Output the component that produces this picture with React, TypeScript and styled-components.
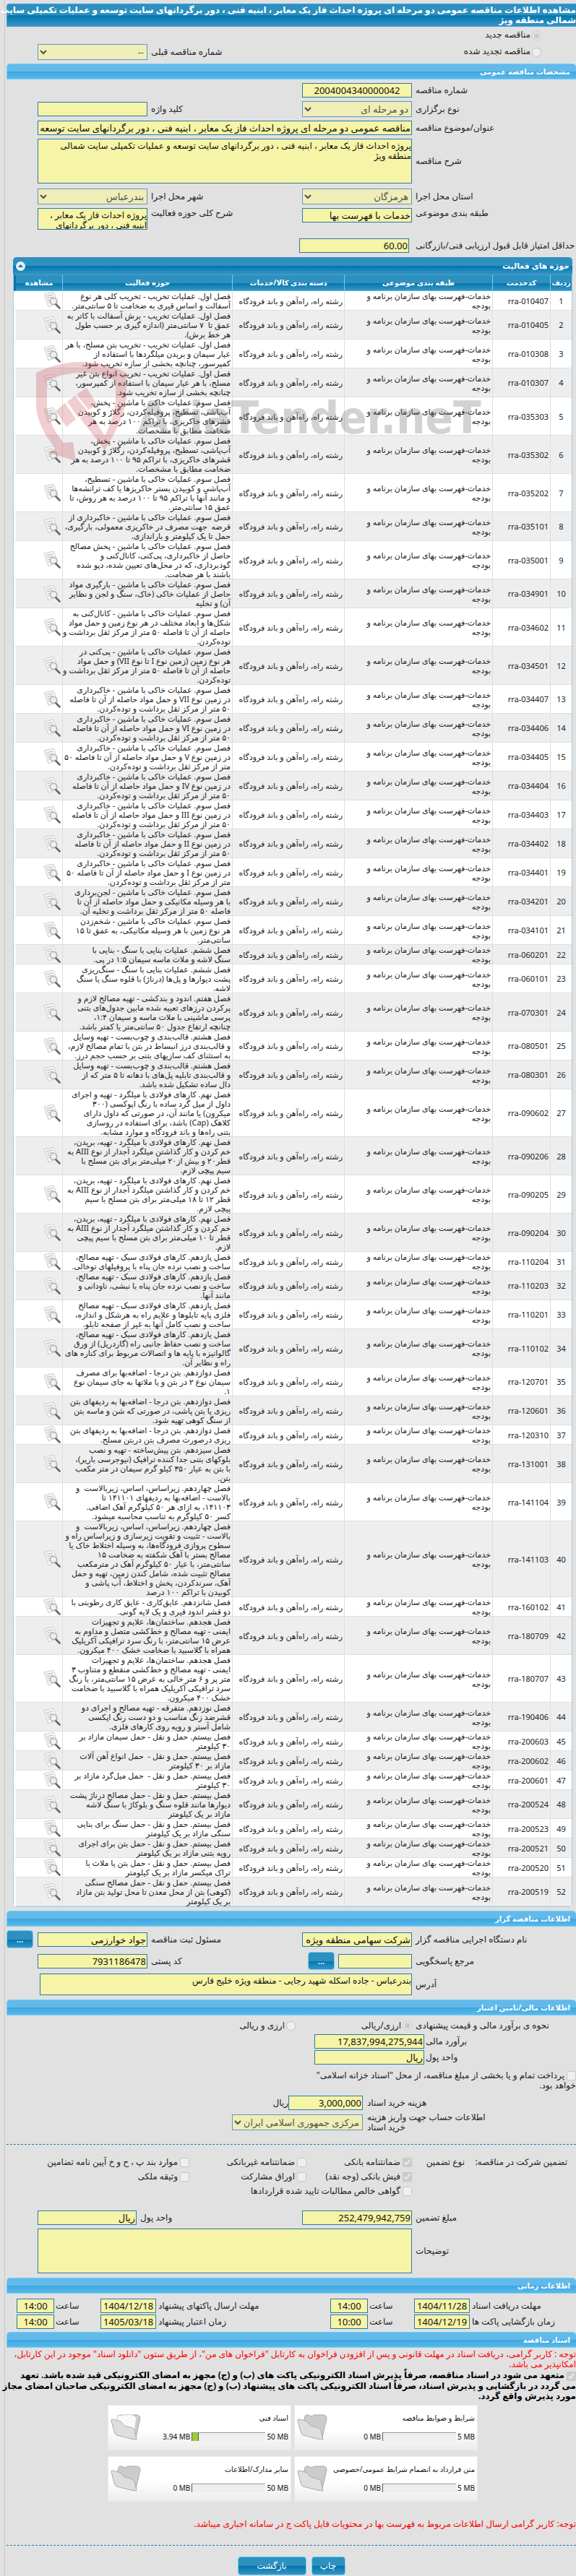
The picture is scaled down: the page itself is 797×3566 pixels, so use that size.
import React from "react";
import styled, { createGlobalStyle, css } from "styled-components";

const FONT = `"Noto Sans", "DejaVu Sans", sans-serif`;

const GlobalStyle = createGlobalStyle`
  * { box-sizing: border-box; }
  body { margin: 0; background: #e1e1e1; color: #222; font: 12px/14px ${FONT}; overflow-x: hidden; }
  input, textarea, button { font-family: inherit; }
`;

const darkBar = css`
  background: linear-gradient(#2e90bf 0, #2e90bf 50%, #0077ae 52%, #3a94c4 100%);
`;

const Page = styled.main`
  margin-left: 6px;
  padding: 5px 0 5px 2px;
  border-left: 1px solid #c8c8c8;
  display: flex;
  flex-direction: column;
`;

const TitleBar = styled.h1`
  ${darkBar}
  margin: 0;
  padding: 1px 0 1px 8px;
  border: 1px solid #3c9be0;
  border-right: 0;
  border-radius: 4px 0 0 0;
  color: #fff;
  font-size: 12px;
  line-height: 14px;
  font-weight: bold;
  white-space: nowrap;
`;

const SectionBar = styled.h2`
  margin: 0;
  height: 22px;
  padding: 0 8px;
  display: flex;
  align-items: center;
  border: 1px solid #6fd0f8;
  border-right: 0;
  border-radius: 5px 5px 0 0;
  background: linear-gradient(#63b9e9 0, #63b9e9 48%, #3aa7e2 50%, #5bb8ea 100%);
  color: #fff;
  font-size: 10px;
  font-weight: bold;
`;

const fieldLook = css`
  border: 1px solid #2a7aa8;
  background: #f6f4a6;
  color: #111;
  border-radius: 0;
  margin: 0;
  min-width: 0;
`;

const Field = styled.input<{ $center?: boolean }>`
  ${fieldLook}
  height: 20px;
  width: 100%;
  padding: 0 1px;
  font-size: 13px;
  text-align: ${(p) => (p.$center ? "center" : "right")};
`;

const Area = styled.textarea<{ $h: number }>`
  ${fieldLook}
  display: block;
  width: 100%;
  height: ${(p) => p.$h}px;
  padding: 2px 0;
  resize: none;
  font-size: 12px;
  line-height: 14px;
  overflow-y: auto;
`;

const Choice = styled.select`
  ${fieldLook}
  height: 22px;
  width: 100%;
  font-family: inherit;
  font-size: 13px;
`;

const Form = styled.div<{ $flush?: boolean }>`
  display: flex;
  flex-direction: column;
  gap: 5px;
  padding: 5px 0 6px ${(p) => (p.$flush ? 0 : 43)}px;
`;

const Row = styled.div<{ $cols?: string; $top?: boolean; $after?: number }>`
  display: grid;
  grid-template-columns: ${(p) => p.$cols ?? "227px 152px 1fr 152px"};
  align-items: ${(p) => (p.$top ? "start" : "center")};
  margin-bottom: ${(p) => p.$after ?? 0}px;
`;

const Wide = styled.div`
  grid-column: 2 / -1;
`;

const Left = styled.div`
  text-align: left;
`;

const Label = styled.label<{ $pad?: number }>`
  text-align: left;
  padding-left: ${(p) => p.$pad ?? 5}px;
  white-space: nowrap;
`;

const Kinds = styled.div`
  padding: 0 0 5px 43px;
`;

const KindRow = styled.div`
  display: grid;
  grid-template-columns: 1fr 110px 152px;
  align-items: center;
  height: 23px;
  padding-right: 48px;
  white-space: nowrap;
`;

const Radio = styled.input.attrs({ type: "radio", disabled: true })`
  width: 13px;
  height: 13px;
  margin: 0 0 0 2px;
  flex: none;
  vertical-align: middle;
`;

const Check = styled.input.attrs({ type: "checkbox", disabled: true })`
  width: 13px;
  height: 13px;
  margin: 0 0 0 3px;
  flex: none;
  vertical-align: middle;
`;

const MoreButton = styled.button`
  ${darkBar}
  width: 37px;
  height: 25px;
  border: 1px solid #6fd0f8;
  border-radius: 4px;
  color: #fff;
  font-size: 11px;
  font-weight: bold;
  padding: 0;
`;

const Panel = styled.section`
  position: relative;
  margin: 0 5px 5px 9px;
  border: 1px solid #a5cbe2;
  border-radius: 5px;
  background: #fff;
`;

const PanelHead = styled.header`
  ${darkBar}
  height: 24px;
  margin: -1px -1px 0;
  padding: 0 4px;
  border-radius: 5px 5px 0 0;
  display: flex;
  align-items: center;
  justify-content: space-between;
  color: #fff;
  font-size: 11px;
  font-weight: bold;
`;

const Collapse = styled.button`
  width: 13px;
  height: 13px;
  padding: 0;
  border: 0;
  border-radius: 50%;
  background: #e4f1f8;
  display: grid;
  place-items: center;
`;

const Grid = styled.table`
  width: 100%;
  table-layout: fixed;
  border-collapse: separate;
  border-spacing: 0;
  font-size: 11px;
  line-height: 13px;
  th {
    ${darkBar}
    height: 23px;
    padding: 0;
    color: #fff;
    font-size: 10px;
    border-left: 1px solid #7cc8ee;
    border-bottom: 1px solid #58bfe8;
    border-top: 1px solid #3fa0d0;
  }
  th:last-child { border-left-width: 3px; border-left-color: #0077ae; }
  td {
    padding: 0 2px;
    border-left: 1px solid #dedede;
    border-bottom: 1px solid #dedede;
    text-align: right;
    vertical-align: middle;
    white-space: pre;
  }
  td:first-child { text-align: center; }
  td:last-child { border-left: 3px solid #fff; }
  tbody tr:nth-child(even) td { background: #eee; }
`;

const Col = styled.col<{ $w?: number }>`
  width: ${(p) => (p.$w ? p.$w + "px" : "auto")};
`;

const ViewButton = styled.button`
  display: block;
  width: 24px;
  height: 24px;
  padding: 0;
  border: 0;
  background: none;
`;

const Watermark = styled.div`
  position: absolute;
  left: 31px;
  top: 144px;
  display: flex;
  direction: ltr;
  gap: 14px;
  pointer-events: none;
`;

const WatermarkText = styled.span`
  padding-top: 48px;
  font: bold 63px/60px "DejaVu Sans Condensed", sans-serif;
  color: rgba(90, 90, 90, 0.27);
  white-space: nowrap;
`;

const Rule = styled.hr`
  margin: 0;
  border: 0;
  border-top: 1px dashed #2a7aa8;
`;

const Money = styled.div`
  padding: 3px 0 14px;
  display: flex;
  flex-direction: column;
`;

const MoneyRow = styled.div<{ $label: number; $field: string; $h: number }>`
  display: grid;
  grid-template-columns: ${(p) => p.$label}px ${(p) => p.$field} 1fr;
  align-items: center;
  min-height: ${(p) => p.$h}px;
`;

const Treasury = styled.label`
  display: block;
  padding: 7px 0 6px;
`;

const Option = styled.label`
  display: flex;
  align-items: center;
  white-space: nowrap;
`;

const Guarantee = styled.div`
  display: grid;
  grid-template-columns: 142px 73px 146px 162px 1fr;
  grid-auto-rows: 20px;
  align-items: center;
  padding: 14px 12px 12px 0;
  white-space: nowrap;
  & > :nth-child(6), & > :nth-child(9) { grid-column-start: 3; }
`;

const Times = styled.div`
  display: grid;
  grid-template-columns: 147px 77px 64px 52px 1fr 77px 64px 52px;
  gap: 2px 0;
  align-items: center;
  padding: 7px 0 4px 14px;
`;

const Notice = styled.p<{ $gap?: number }>`
  margin: ${(p) => p.$gap ?? 0}px 0;
  padding-top: 2px;
  color: #f00;
`;

const Pledge = styled.label`
  display: block;
  font-weight: bold;
  color: #000;
  margin: 1px 0 5px;
  white-space: nowrap;
`;

const Cards = styled.div`
  display: grid;
  grid-template-columns: 254px 254px;
  justify-content: center;
  gap: 8px 4px;
  padding-left: 4px;
`;

const Card = styled.article`
  height: 63px;
  display: grid;
  grid-template-columns: minmax(0, 1fr) 42px;
  align-items: center;
  padding: 0 3px;
  background: linear-gradient(#fff 55%, #ececec);
  border: 1px solid #eaeaea;
`;

const CardBody = styled.div`
  display: flex;
  flex-direction: column;
  gap: 12px;
  color: #111;
  font-size: 10px;
  white-space: nowrap;
`;

const Usage = styled.div`
  display: flex;
  align-items: center;
  gap: 2px;
`;

const Track = styled.div`
  width: 102px;
  height: 12px;
  direction: ltr;
  background: #eee;
  border-top: 1px solid #999;
  border-left: 1px solid #555;
`;

const Fill = styled.div`
  height: 100%;
  background: #9acd32;
  border-right: 1px solid #555;
`;

const Actions = styled.footer`
  display: flex;
  justify-content: center;
  gap: 7px;
  padding: 15px 0 0;
`;

const Action = styled.button<{ $w: number }>`
  ${darkBar}
  width: ${(p) => p.$w}px;
  height: 26px;
  border: 1px solid #6fd0f8;
  border-radius: 4px;
  color: #fff;
  font-size: 12px;
  padding: 0;
`;

const ROWS: [string, string][] = [
  ["010407", "فصل اول. عملیات تخریب - تخریب کلی هر نوع\nآسفالت و اساس قیری به ضخامت تا ۵ سانتی‌متر."],
  ["010405", "فصل اول. عملیات تخریب - برش آسفالت با کاتر به\nعمق تا  ۷ سانتی‌متر (اندازه گیری بر حسب طول\nهر خط برش)."],
  ["010308", "فصل اول. عملیات تخریب - تخریب بتن مسلح، با هر\nعیار سیمان و بریدن میلگردها با استفاده از\nکمپرسور، چنانچه بخشی از سازه تخریب شود."],
  ["010307", "فصل اول. عملیات تخریب - تخریب انواع بتن غیر\nمسلح، با هر عیار سیمان با استفاده از کمپرسور،\nچنانچه بخشی از سازه تخریب شود."],
  ["035303", "فصل سوم. عملیات خاکی با ماشین - پخش،\nآب‌پاشی، تسطیح، پروفیله‌کردن، رگلاژ و کوبیدن\nقشرهای خاکریزی، با تراکم ۱۰۰ درصد به هر\nضخامت مطابق با مشخصات."],
  ["035302", "فصل سوم. عملیات خاکی با ماشین - پخش،\nآب‌پاشی، تسطیح، پروفیله‌کردن، رگلاژ و کوبیدن\nقشرهای خاکریزی، با تراکم ۹۵ تا ۱۰۰ درصد به هر\nضخامت مطابق با مشخصات."],
  ["035202", "فصل سوم. عملیات خاکی با ماشین - تسطیح،\nآب‌پاشي و کوبیدن بستر خاکریزها یا کف ترانشه‌ها\nو مانند آنها با تراکم ۹۵ تا ۱۰۰ درصد به هر روش، تا\nعمق ۱۵ سانتی‌متر."],
  ["035101", "فصل سوم. عملیات خاکی با ماشین - خاکبرداری از\nقرضه  جهت مصرف در خاکریزی معمولی، بارگیری،\nحمل تا یک کیلومتر و باراندازی."],
  ["035001", "فصل سوم. عملیات خاکی با ماشین - پخش مصالح\nحاصل از خاکبرداری، پی‌کنی، کانال‌کنی و\nگودبرداری، که در محل‌های تعیین شده، دپو شده\nباشند با هر ضخامت."],
  ["034901", "فصل سوم. عملیات خاکی با ماشین - بارگیری مواد\nحاصل از عملیات خاکی (خاک، سنگ و لجن و نظایر\nآن) و تخلیه"],
  ["034602", "فصل سوم. عملیات خاکی با ماشین - کانال‌کنی به\nشکل‌ها و ابعاد مختلف در هر نوع زمین و حمل مواد\nحاصله از آن تا فاصله ۵۰ متر از مرکز ثقل برداشت و\nتوده‌کردن."],
  ["034501", "فصل سوم. عملیات خاکی با ماشین - پی‌کنی در\nهر نوع زمین (زمین نوع I تا نوع VII) و حمل مواد\nحاصله از آن تا فاصله ۵۰ متر از مرکز ثقل برداشت و\nتوده‌کردن."],
  ["034407", "فصل سوم. عملیات خاکی با ماشین - خاکبرداری\nدر زمین نوع VII و حمل مواد حاصله از آن تا فاصله\n۵۰ متر از مرکز ثقل برداشت و توده‌کردن."],
  ["034406", "فصل سوم. عملیات خاکی با ماشین - خاکبرداری\nدر زمین نوع VI و حمل مواد حاصله از آن تا فاصله\n۵۰ متر از مرکز ثقل برداشت و توده‌کردن."],
  ["034405", "فصل سوم. عملیات خاکی با ماشین - خاکبرداری\nدر زمین نوع V و حمل مواد حاصله از آن تا فاصله ۵۰\nمتر از مرکز ثقل برداشت و توده‌کردن."],
  ["034404", "فصل سوم. عملیات خاکی با ماشین - خاکبرداری\nدر زمین نوع IV و حمل مواد حاصله از آن تا فاصله\n۵۰ متر از مرکز ثقل برداشت و توده‌کردن."],
  ["034403", "فصل سوم. عملیات خاکی با ماشین - خاکبرداری\nدر زمین نوع III و حمل مواد حاصله از آن تا فاصله\n۵۰ متر از مرکز ثقل برداشت و توده‌کردن."],
  ["034402", "فصل سوم. عملیات خاکی با ماشین - خاکبرداری\nدر زمین نوع II و حمل مواد حاصله از آن تا فاصله\n۵۰ متر از مرکز ثقل برداشت و توده‌کردن."],
  ["034401", "فصل سوم. عملیات خاکی با ماشین - خاکبرداری\nدر زمین نوع I و حمل مواد حاصله از آن تا فاصله ۵۰\nمتر از مرکز ثقل برداشت و توده‌کردن."],
  ["034201", "فصل سوم. عملیات خاکی با ماشین - لجن‌برداری\nبا هر وسیله مکانیکی و حمل مواد حاصله از آن تا\nفاصله ۵۰ متر از مرکز ثقل برداشت و تخلیه آن."],
  ["034101", "فصل سوم. عملیات خاکی با ماشین - شخم‌زدن\nهر نوع زمین با هر وسیله مکانیکی، به عمق تا ۱۵\nسانتی‌متر."],
  ["060201", "فصل ششم. عملیات بنایی با سنگ - بنایی با\nسنگ لاشه و ملات ماسه سیمان ۱:۵ در پی."],
  ["060101", "فصل ششم. عملیات بنایی با سنگ - سنگ‌ریزی\nپشت دیوارها و پل‌ها (درناژ) با قلوه سنگ یا سنگ\nلاشه."],
  ["070301", "فصل هفتم. اندود و بندکشی - تهیه مصالح لازم و\nپرکردن درزهای تعبیه شده مابین جدول‌های بتنی\nپرسی ماشینی با ملات ماسه و سیمان ۱:۴،\nچنانچه ارتفاع جدول ۵۰ سانتی‌متر یا کمتر باشد."],
  ["080501", "فصل هشتم. قالب‌بندی و چوب‌بست - تهیه وسایل\nو قالب‌بندی درز انبساط در بتن با تمام مصالح لازم،\nبه استثنای کف سازیهای بتنی بر حسب حجم درز."],
  ["080301", "فصل هشتم. قالب‌بندی و چوب‌بست - تهیه وسایل\nو قالب‌بندی تابلیه پل‌های با دهانه تا ۵ متر که از\nدال ساده تشکیل شده باشد."],
  ["090602", "فصل نهم. کارهای فولادی با میلگرد - تهیه و اجرای\nداول از میل گرد ساده با رنگ اپوکسی (۳۰۰\nمیکرون) یا مانند آن، در صورتی که داول دارای\nکلاهک (Cap) باشد، برای استفاده در روسازی\nبتنی راه‌ها و باند فرودگاه و موارد مشابه."],
  ["090206", "فصل نهم. کارهای فولادی با میلگرد - تهیه، بریدن،\nخم کردن و کار گذاشتن میلگرد آجدار از نوع AIII به\nقطر۲۰ و بیش از۲۰ میلی‌متر برای بتن مسلح با\nسیم پیچی لازم."],
  ["090205", "فصل نهم. کارهای فولادی با میلگرد - تهیه، بریدن،\nخم کردن و کار گذاشتن میلگرد آجدار از نوع AIII به\nقطر ۱۲ تا ۱۸ میلی‌متر برای بتن مسلح با سیم\nپیچی لازم."],
  ["090204", "فصل نهم. کارهای فولادی با میلگرد - تهیه، بریدن،\nخم کردن و کار گذاشتن میلگرد آجدار از نوع AIII به\nقطر تا ۱۰ میلی‌متر برای بتن مسلح با سیم پیچی\nلازم."],
  ["110204", "فصل یازدهم. کارهای فولادی سبک - تهیه مصالح،\nساخت و نصب نرده جان پناه با پروفیلهای توخالی."],
  ["110203", "فصل یازدهم. کارهای فولادی سبک - تهیه مصالح،\nساخت و نصب نرده جان پناه با نبشی، ناودانی و\nمانند آنها."],
  ["110201", "فصل یازدهم. کارهای فولادی سبک - تهیه مصالح\nفلزی پایه تابلوها و علایم راه به هرشکل و اندازه،\nساخت و نصب کامل آنها به غیر از صفحه تابلو."],
  ["110102", "فصل یازدهم. کارهای فولادی سبک - تهیه مصالح،\nساخت و نصب حفاظ جانبی راه (گاردریل) از ورق\nگالوانیزه با پایه ها و اتصالات مربوط برای کناره های\nراه و نظایر آن."],
  ["120701", "فصل دوازدهم. بتن درجا - اضافه‌بها برای مصرف\nسیمان نوع ۲ در بتن و یا ملاتها به جای سیمان نوع\n۱."],
  ["120601", "فصل دوازدهم. بتن درجا - اضافه‌بها به ردیفهای بتن\nریزی یا بتن پاشی، در صورتی که شن و ماسه بتن\nاز سنگ کوهی تهیه شود."],
  ["120310", "فصل دوازدهم. بتن درجا - اضافه‌بها به ردیفهای بتن\nریزی درصورت مصرف بتن دربتن مسلح."],
  ["131001", "فصل سیزدهم. بتن پیش‌ساخته - تهیه و نصب\nبلوکهای بتنی جدا کننده ترافیک (نیوجرسی باریر)،\nبا بتن به عیار ۳۵۰ کیلو گرم سیمان در متر مکعب\nبتن."],
  ["141104", "فصل چهاردهم. زیراساس، اساس، زیربالاست  و\nبالاست - اضافه‌بها به ردیفهای ۱۴۱۱۰۱ تا\n۱۴۱۱۰۳، به ازای هر ۵۰ کیلوگرم آهک اضافی.\nکسر ۵۰ کیلوگرم به تناسب محاسبه میشود."],
  ["141103", "فصل چهاردهم. زیراساس، اساس، زیربالاست  و\nبالاست - تثبیت و تقویت زیرسازی و زیراساس راه و\nسطوح پروازی فرودگاه‌ها، به وسیله اختلاط خاک یا\nمصالح بستر با آهک شکفته به ضخامت ۱۵\nسانتی‌متر، با عیار ۵۰ کیلوگرم آهک در مترمکعب\nمصالح تثبیت شده، شامل کندن زمین، تهیه و حمل\nآهک، سرندکردن، پخش و اختلاط، آب پاشی و\nکوبیدن با تراکم ۱۰۰ درصد"],
  ["160102", "فصل شانزدهم. عایق‌کاری - عایق کاری رطوبتی با\nدو قشر اندود قیری و یک لایه گونی."],
  ["180709", "فصل هجدهم. ساختمان‌ها، علایم و تجهیزات\nایمنی - تهیه مصالح و خط‌کشی متصل و مداوم به\nعرض ۱۵ سانتی‌متر، با رنگ سرد ترافیکی آکریلیک\nهمراه با گلاسبید با ضخامت خشک ۴۰۰ میکرون."],
  ["180707", "فصل هجدهم. ساختمان‌ها، علایم و تجهیزات\nایمنی - تهیه مصالح و خط‌کشی منقطع و متناوب ۳\nمتر پر و ۶ متر خالی به عرض ۱۵ سانتی‌متر، با رنگ\nسرد ترافیکی آکریلیک همراه با گلاسبید با ضخامت\nخشک ۴۰۰ میکرون."],
  ["190406", "فصل نوزدهم. متفرقه - تهیه مصالح و اجرای دو\nقشرضد زنگ مناسب و دو دست رنگ اپکسی\nشامل آستر و رویه روی کارهای فلزی."],
  ["200603", "فصل بیستم. حمل و نقل - حمل سیمان مازاد بر\n۳۰ کیلومتر"],
  ["200602", "فصل بیستم. حمل و نقل -  حمل انواع آهن آلات\nمازاد بر ۳۰ کیلومتر"],
  ["200601", "فصل بیستم. حمل و نقل -  حمل میل‌گرد مازاد بر\n۳۰ کیلومتر"],
  ["200524", "فصل بیستم. حمل و نقل - حمل مصالح درناژ پشت\nدیوارها مانند قلوه سنگ و بلوکاژ با سنگ لاشه\nمازاد بر یک کیلومتر"],
  ["200523", "فصل بیستم. حمل و نقل - حمل سنگ برای بنایی\nسنگی مازاد بر یک کیلومتر"],
  ["200521", "فصل بیستم. حمل و نقل - حمل بتن برای اجرای\nرویه بتنی مازاد بر یک کیلومتر"],
  ["200520", "فصل بیستم. حمل و نقل - حمل بتن یا ملات با\nتراک میکسر مازاد بر یک کیلومتر"],
  ["200519", "فصل بیستم. حمل و نقل - حمل مصالح سنگی\n(کوهی) بتن از محل معدن تا محل تولید بتن مازاد\nبر یک کیلومتر"],
];

const ViewIcon = () => (
  <svg width="24" height="24" viewBox="0 0 24 24">
    <path d="M1 3 14 0l6 15-13 6z" fill="#f6f6f6" stroke="#ccc" />
    <path d="M4 6l9-2M5 9l9-2M6 12l5-1M7 15l4-1" stroke="#b5b5b5" />
    <circle cx="14" cy="13" r="4.5" fill="#eef0f0" fillOpacity=".9" stroke="#b0b0b0" strokeWidth="1.4" />
    <path d="m17.500 17.500 5 5" stroke="#666" strokeWidth="2.600" strokeLinecap="round" />
  </svg>
);

const Shield = () => (
  <svg width="126" height="138" viewBox="0 0 126 138">
    <g fill="rgba(190,30,45,.22)">
      <path d="M0 15Q62-15 125 15V50Q122 78 95 122L61 78 73 68 95 102Q110 72 110 50V26Q62 4 15 26V62Q18 88 38 112L51 111 55 137 17 126 27 120Q2 90 0 62z" />
      <path d="M27 68 40 57 55 79 42 90zM43 55 54 47 70 67 58 77zM56 45 70 36 85 60 72 66z" />
    </g>
  </svg>
);

const Folder = ({ full }: { full?: boolean }) => (
  <svg width="42" height="36" viewBox="0 0 42 36">
    <path d="M9 10 11 3Q12 0 15 1l5 2 4-2h11q6 0 6 5l-6 26-4 3z" fill="#ccc" stroke="#aaa" />
    {full && <path d="m9 2 20-2 7 5-4 24-22-10z" fill="#fafafa" stroke="#ccc" />}
    <path d="M1 9Q0 7 3 7l11 3 5 6q12 2 14 6l3 13-8-1L8 29Q6 28 5 24z" fill="#dedede" stroke="#aaa" />
  </svg>
);

const UsageCard = ({ title, used, total, percent, full }: { title: string; used: string; total: string; percent: number; full?: boolean }) => (
  <Card>
    <CardBody>
      <div>{title}</div>
      <Usage>
        <span dir="ltr">{total}</span>
        <Track>{percent > 0 && <Fill style={{ width: `${percent}%` }} />}</Track>
        <span dir="ltr">{used}</span>
      </Usage>
    </CardBody>
    <Folder full={full} />
  </Card>
);

const Pick = ({ id, text }: { id: string; text: string }) => (
  <Choice id={id} disabled>
    <option>{text}</option>
  </Choice>
);

const When = ({ id, label, date, time }: { id: string; label: string; date: string; time: string }) => (
  <>
    <Label $pad={3} htmlFor={id + "-d"}>{label}</Label>
    <Field id={id + "-d"} $center readOnly value={date} dir="ltr" />
    <Label $pad={2} htmlFor={id + "-t"}>ساعت</Label>
    <Field id={id + "-t"} $center readOnly value={time} dir="ltr" />
  </>
);

export default function App() {
  return (
    <div dir="rtl" lang="fa">
      <GlobalStyle />
      <Page>
        <TitleBar>
          مشاهده اطلاعات مناقصه عمومی دو مرحله ای پروژه احداث فاز یک معابر ، ابنیه فنی ، دور برگردانهای سایت توسعه و عملیات تکمیلی سایت<br />
          شمالی منطقه ویژ
        </TitleBar>
        <Kinds>
          <KindRow>
            <label><Radio name="kind" defaultChecked />مناقصه جدید</label>
          </KindRow>
          <KindRow>
            <label><Radio name="kind" />مناقصه تجدید شده</label>
            <Label htmlFor="prev">شماره مناقصه قبلی</Label>
            <Pick id="prev" text="--" />
          </KindRow>
        </Kinds>

        <SectionBar>مشخصات مناقصه عمومی</SectionBar>
        <Form>
          <Row>
            <Label htmlFor="no">شماره مناقصه</Label>
            <Field id="no" $center readOnly value="2004004340000042" />
          </Row>
          <Row>
            <Label htmlFor="type">نوع برگزاری</Label>
            <Pick id="type" text="دو مرحله ای" />
            <Label htmlFor="kw">کلید واژه</Label>
            <Field id="kw" readOnly value="" />
          </Row>
          <Row>
            <Label htmlFor="subject">عنوان/موضوع مناقصه</Label>
            <Wide>
              <Field id="subject" readOnly value="مناقصه عمومی دو مرحله ای پروژه احداث فاز یک معابر ، ابنیه فنی ، دور برگردانهای سایت توسعه و عملیات تکمیلی سایت شمالی منطقه ویژ" />
            </Wide>
          </Row>
          <Row $after={2}>
            <Label htmlFor="desc">شرح مناقصه</Label>
            <Wide>
              <Area id="desc" $h={62} readOnly value={"پروژه احداث فاز یک معابر ، ابنیه فنی ، دور برگردانهای سایت توسعه و عملیات تکمیلی سایت شمالی\nمنطقه ویژ"} />
            </Wide>
          </Row>
          <Row>
            <Label htmlFor="province">استان محل اجرا</Label>
            <Pick id="province" text="هرمزگان" />
            <Label htmlFor="city">شهر محل اجرا</Label>
            <Pick id="city" text="بندرعباس" />
          </Row>
          <Row $top $after={7}>
            <Label htmlFor="cls">طبقه بندی موضوعی</Label>
            <Field id="cls" readOnly value="خدمات با فهرست بها" />
            <Label htmlFor="scope">شرح کلی حوزه فعالیت</Label>
            <Area id="scope" $h={30} readOnly value="پروژه احداث فاز یک معابر ، ابنیه فنی ، دور برگردانهای سایت توسعه و عملیات تکمیلی سایت شمالی منطقه ویژ" />
          </Row>
          <Row $cols="231px 152px 1fr">
            <Label $pad={9} htmlFor="score">حداقل امتیاز قابل قبول ارزیابی فنی/بازرگانی</Label>
            <Field id="score" readOnly value="60.00" />
          </Row>
        </Form>

        <Panel>
          <PanelHead>
            حوزه های فعالیت
            <Collapse aria-label="بستن">
              <svg width="7" height="4" viewBox="0 0 7 4"><path d="M0 4 3.500 0 7 4z" fill="#1b6f9d" /></svg>
            </Collapse>
          </PanelHead>
          <Grid>
            <colgroup>
              <Col $w={30} />
              <Col $w={80} />
              <Col />
              <Col $w={155} />
              <Col $w={235} />
              <Col $w={67} />
            </colgroup>
            <thead>
              <tr>
                <th>ردیف</th>
                <th>کدخدمت</th>
                <th>طبقه بندی موضوعی</th>
                <th>دسته بندی کالا/خدمات</th>
                <th>حوزه فعالیت</th>
                <th>مشاهده</th>
              </tr>
            </thead>
            <tbody>
              {ROWS.map(([code, text], i) => (
                <tr key={code}>
                  <td>{i + 1}</td>
                  <td>rra-{code}</td>
                  <td>{"خدمات-فهرست بهای سازمان برنامه و\nبودجه"}</td>
                  <td>رشته راه، راه‌آهن و باند فرودگاه</td>
                  <td>{text}</td>
                  <td><ViewButton aria-label="مشاهده"><ViewIcon /></ViewButton></td>
                </tr>
              ))}
            </tbody>
          </Grid>
          <Watermark>
            <Shield />
            <WatermarkText>AriaTender.neT</WatermarkText>
          </Watermark>
        </Panel>

        <SectionBar>اطلاعات مناقصه گزار</SectionBar>
        <Form $flush>
          <Row $cols="227px 152px 1fr 152px 43px">
            <Label htmlFor="org">نام دستگاه اجرایی مناقصه گزار</Label>
            <Field id="org" readOnly value="شرکت سهامی منطقه ویژه اقتصادی" />
            <Label htmlFor="owner">مسئول ثبت مناقصه</Label>
            <Field id="owner" readOnly value="جواد خوارزمی" />
            <Left><MoreButton>...</MoreButton></Left>
          </Row>
          <Row $cols="227px 102px 42px 1fr 152px 43px">
            <Label htmlFor="ref">مرجع پاسخگویی</Label>
            <Field id="ref" readOnly value="" />
            <Left><MoreButton>...</MoreButton></Left>
            <Label htmlFor="zip">کد پستی</Label>
            <Field id="zip" readOnly value="7931186478" />
          </Row>
          <Row $cols="227px 1fr 46px">
            <Label htmlFor="addr">آدرس</Label>
            <Area id="addr" $h={30} readOnly value="بندرعباس - جاده اسکله شهید رجایی - منطقه ویژه خلیج فارس" />
          </Row>
        </Form>

        <SectionBar>اطلاعات مالی/تامین اعتبار</SectionBar>
        <Money>
          <MoneyRow $label={227} $field="161px" $h={22}>
            <Label as="span">نحوه ی برآورد مالی و قیمت پیشنهادی</Label>
            <Option><Radio name="cur" defaultChecked />ارزی/ریالی</Option>
            <Option><Radio name="cur" />ارزی و ریالی</Option>
          </MoneyRow>
          <MoneyRow $label={210} $field="152px" $h={22}>
            <Label $pad={2} htmlFor="est">برآورد مالی</Label>
            <Field id="est" readOnly value="17,837,994,275,944" />
          </MoneyRow>
          <MoneyRow $label={210} $field="152px" $h={22}>
            <Label $pad={2} htmlFor="unit">واحد پول</Label>
            <Field id="unit" readOnly value="ریال" />
          </MoneyRow>
          <Treasury>
            <Check />پرداخت تمام و یا بخشی از مبلغ مناقصه، از محل "اسناد خزانه اسلامی"<br />خواهد بود.
          </Treasury>
          <MoneyRow $label={295} $field="103px" $h={22}>
            <Label $pad={6} htmlFor="fee">هزینه خرید اسناد</Label>
            <Field id="fee" readOnly value="3,000,000" />
            <span>ریال</span>
          </MoneyRow>
          <MoneyRow $label={295} $field="181px" $h={32}>
            <Label $pad={6} htmlFor="acc">
              اطلاعات حساب جهت واریز هزینه<br />خرید اسناد
            </Label>
            <Pick id="acc" text="مرکزی جمهوری اسلامی ایران" />
          </MoneyRow>
        </Money>
        <Rule />

        <Guarantee>
          <span>تضمین شرکت در مناقصه:</span>
          <span>نوع تضمین</span>
          <Option><Check defaultChecked />ضمانتنامه بانکی</Option>
          <Option><Check />ضمانتنامه غیربانکی</Option>
          <Option><Check />موارد بند پ ، ح و خ آیین نامه تضامین</Option>
          <Option><Check defaultChecked />فیش بانکی (وجه نقد)</Option>
          <Option><Check />اوراق مشارکت</Option>
          <Option><Check />وثیقه ملکی</Option>
          <Option><Check />گواهی خالص مطالبات تایید شده قراردادها</Option>
        </Guarantee>
        <Form>
          <Row $cols="227px 152px 1fr 137px">
            <Label htmlFor="gAmount">مبلغ تضمین</Label>
            <Field id="gAmount" readOnly value="252,479,942,759" />
            <Label htmlFor="gUnit">واحد پول</Label>
            <Field id="gUnit" readOnly value="ریال" />
          </Row>
          <Row>
            <Label htmlFor="notes">توضیحات</Label>
            <Wide><Area id="notes" $h={62} readOnly value="" /></Wide>
          </Row>
        </Form>

        <SectionBar>اطلاعات زمانی</SectionBar>
        <Times>
          <When id="docs" label="مهلت دریافت اسناد" date="1404/11/28" time="14:00" />
          <When id="send" label="مهلت ارسال پاکتهای پیشنهاد" date="1404/12/18" time="14:00" />
          <When id="open" label="زمان بازگشایی پاکت ها" date="1404/12/19" time="10:00" />
          <When id="valid" label="زمان اعتبار پیشنهاد" date="1405/03/18" time="14:00" />
        </Times>

        <SectionBar>اسناد مناقصه</SectionBar>
        <Notice>
          توجه : کاربر گرامی، دریافت اسناد در مهلت قانونی و پس از افزودن فراخوان به کارتابل "فراخوان های من"، از طریق ستون "دانلود اسناد" موجود در این کارتابل،<br />
          امکانپذیر می باشد.
        </Notice>
        <Pledge>
          <Check defaultChecked />متعهد می شود در اسناد مناقصه، صرفاً پذیرش اسناد الکترونیکی پاکت های (ب) و (ج) مجهز به امضای الکترونیکی قید شده باشد. تعهد<br />
          می گردد در بازگشایی و پذیرش اسناد، صرفاً اسناد الکترونیکی پاکت های پیشنهاد (ب) و (ج) مجهز به امضای الکترونیکی صاحبان امضای مجاز<br />
          مورد پذیرش واقع گردد.
        </Pledge>
        <Cards>
          <UsageCard title="شرایط و ضوابط مناقصه" total="5 MB" used="0 MB" percent={0} />
          <UsageCard title="اسناد فنی" total="50 MB" used="3.94 MB" percent={9} full />
          <UsageCard title="متن قرارداد به انضمام شرایط عمومی/خصوصی" total="5 MB" used="0 MB" percent={0} />
          <UsageCard title="سایر مدارک/اطلاعات" total="50 MB" used="0 MB" percent={0} />
        </Cards>
        <Notice $gap={22}>
          توجه: کاربر گرامی ارسال اطلاعات مربوط به فهرست بها در محتویات فایل پاکت ج در سامانه اجباری میباشد.
        </Notice>
        <Rule />
        <Actions>
          <Action $w={47}>چاپ</Action>
          <Action $w={95}>بازگشت</Action>
        </Actions>
      </Page>
    </div>
  );
}
